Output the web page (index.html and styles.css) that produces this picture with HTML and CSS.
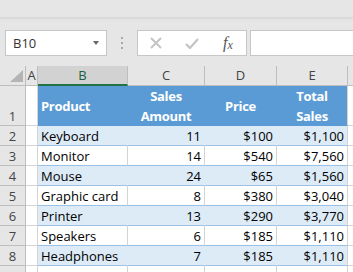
FILE: index.html
```html
<!DOCTYPE html>
<html lang="en">
<head>
    <meta charset="UTF-8">
    <title>Sales Table</title>
    <link rel="stylesheet" href="styles.css">
</head>
<body>
    <div class="topbar"></div>

    <div class="formula-bar">
        <div class="name-box">
            <span>B10</span>
            <span class="caret"></span>
        </div>
        <div class="grip">
            <svg width="3" height="13" viewBox="0 0 3 13">
                <rect x="0" y="0" width="2" height="2" fill="#a8a8a8"/>
                <rect x="0" y="5" width="2" height="2" fill="#a8a8a8"/>
                <rect x="0" y="10" width="2" height="2" fill="#a8a8a8"/>
            </svg>
        </div>
        <div class="fx-buttons">
            <div class="fx-btn">
                <svg width="12" height="12" viewBox="0 0 12 12">
                    <path d="M1 1 L11 11 M11 1 L1 11" stroke="#c4c4c4" stroke-width="2" fill="none"/>
                </svg>
            </div>
            <div class="fx-btn">
                <svg width="14" height="11" viewBox="0 0 14 11">
                    <path d="M1 6 L5 10 L13 1" stroke="#c4c4c4" stroke-width="2.2" fill="none"/>
                </svg>
            </div>
            <div class="fx-btn fx-label"><i>f</i><i class="x">x</i></div>
        </div>
        <div class="formula-input"></div>
    </div>

    <div class="sheet">
        <!-- column headers -->
        <div class="corner"><span class="tri"></span></div>
        <div class="col-head">A</div>
        <div class="col-head active">B</div>
        <div class="col-head">C</div>
        <div class="col-head">D</div>
        <div class="col-head">E</div>
        <div class="col-head"></div>

        <!-- row 1 -->
        <div class="row-head">1</div>
        <div class="cell"></div>
        <div class="cell t hdr left">Product</div>
        <div class="cell t hdr mid">Sales<br>Amount</div>
        <div class="cell t hdr mid">Price</div>
        <div class="cell t hdr mid last">Total<br>Sales</div>
        <div class="cell"></div>

        <div class="row-head">2</div>
        <div class="cell"></div>
        <div class="cell t band">Keyboard</div>
        <div class="cell t band num">11</div>
        <div class="cell t band num">$100</div>
        <div class="cell t band num last">$1,100</div>
        <div class="cell"></div>

        <div class="row-head">3</div>
        <div class="cell"></div>
        <div class="cell t">Monitor</div>
        <div class="cell t num">14</div>
        <div class="cell t num">$540</div>
        <div class="cell t num last">$7,560</div>
        <div class="cell"></div>

        <div class="row-head">4</div>
        <div class="cell"></div>
        <div class="cell t band">Mouse</div>
        <div class="cell t band num">24</div>
        <div class="cell t band num">$65</div>
        <div class="cell t band num last">$1,560</div>
        <div class="cell"></div>

        <div class="row-head">5</div>
        <div class="cell"></div>
        <div class="cell t">Graphic card</div>
        <div class="cell t num">8</div>
        <div class="cell t num">$380</div>
        <div class="cell t num last">$3,040</div>
        <div class="cell"></div>

        <div class="row-head">6</div>
        <div class="cell"></div>
        <div class="cell t band">Printer</div>
        <div class="cell t band num">13</div>
        <div class="cell t band num">$290</div>
        <div class="cell t band num last">$3,770</div>
        <div class="cell"></div>

        <div class="row-head">7</div>
        <div class="cell"></div>
        <div class="cell t">Speakers</div>
        <div class="cell t num">6</div>
        <div class="cell t num">$185</div>
        <div class="cell t num last">$1,110</div>
        <div class="cell"></div>

        <div class="row-head">8</div>
        <div class="cell"></div>
        <div class="cell t band">Headphones</div>
        <div class="cell t band num">7</div>
        <div class="cell t band num">$185</div>
        <div class="cell t band num last">$1,110</div>
        <div class="cell"></div>

        <!-- row 9, only its top edge shows -->
        <div class="row-head"></div>
        <div class="cell"></div>
        <div class="cell"></div>
        <div class="cell"></div>
        <div class="cell"></div>
        <div class="cell"></div>
        <div class="cell"></div>
    </div>
</body>
</html>
```

FILE: styles.css
```css
* {
    margin: 0;
    padding: 0;
    box-sizing: border-box;
}

body {
    font-family: "Open Sans", "Liberation Sans", sans-serif;
    font-size: 13px;
    background: #e6e6e6;
    overflow: hidden;
    height: 272px;
}

.topbar {
    height: 18px;
    background: #e6e6e6;
    border-bottom: 1px solid #d8d8d8;
    box-shadow: 0 1px 2px rgba(0, 0, 0, 0.06);
}

/* formula bar */
.formula-bar {
    display: flex;
    align-items: stretch;
    height: 48px;
    padding: 12px 0 10px 5px;
    overflow: hidden;
}

.name-box {
    flex-shrink: 0;
    width: 102px;
    background: white;
    border: 1px solid #c6c6c6;
    display: flex;
    align-items: center;
    justify-content: space-between;
    padding: 0 7px 0 7px;
    color: #333;
    font-size: 13px;
}

.caret {
    width: 0;
    height: 0;
    border-left: 3.5px solid transparent;
    border-right: 3.5px solid transparent;
    border-top: 4px solid #666;
}

.grip {
    flex-shrink: 0;
    width: 30px;
    display: flex;
    align-items: center;
    justify-content: center;
}

.fx-buttons {
    flex-shrink: 0;
    width: 110px;
    background: white;
    border: 1px solid #c6c6c6;
    display: flex;
}

.fx-btn {
    width: 36px;
    display: flex;
    align-items: center;
    justify-content: center;
}

.fx-label {
    font-family: "Liberation Serif", serif;
    font-size: 16px;
    color: #555;
}

.fx-label .x {
    font-size: 12px;
    margin-top: 4px;
}

.formula-input {
    flex: 1 0 120px;
    margin-left: 3px;
    background: white;
    border: 1px solid #c6c6c6;
}

/* grid */
.sheet {
    display: grid;
    grid-template-columns: 26px 12px 90px 77px 72px 71px 1fr;
    grid-template-rows: 20px 40px repeat(8, 20px);
    background: white;
}

.corner,
.col-head,
.row-head {
    background: #e6e6e6;
    border-right: 1px solid #bebebe;
    border-bottom: 1px solid #bebebe;
    color: #444;
}

.corner {
    display: flex;
    align-items: flex-end;
    justify-content: flex-end;
    padding: 0 2px 3px 0;
}

.tri {
    width: 0;
    height: 0;
    border-left: 13px solid transparent;
    border-bottom: 12px solid #b4b4b4;
}

.col-head {
    display: flex;
    align-items: center;
    justify-content: center;
    line-height: 1;
}

.col-head.active {
    background: #d2d2d2;
    border-bottom: 2px solid #217346;
    color: #1e5e3a;
}

.row-head {
    display: flex;
    align-items: flex-end;
    justify-content: center;
    line-height: 18px;
}

.cell {
    border-right: 1px solid #d4d4d4;
    border-bottom: 1px solid #d4d4d4;
    display: flex;
    align-items: flex-end;
    padding: 0 3px;
    line-height: 18px;
    color: #000;
    white-space: nowrap;
}

.t {
    border-bottom-color: #9bc2e6;
}

.t.band {
    background: #ddebf7;
    border-right-color: #ddebf7;
}

.t.num {
    justify-content: flex-end;
}

.t.hdr {
    background: #5b9bd5;
    border-right-color: #5b9bd5;
    border-bottom-color: #5b9bd5;
    color: white;
    font-weight: bold;
    align-items: center;
    line-height: 20px;
    letter-spacing: -0.3px;
}

.t.hdr.mid {
    justify-content: center;
    text-align: center;
}

.t.last {
    border-right-color: #d4d4d4;
}
```
